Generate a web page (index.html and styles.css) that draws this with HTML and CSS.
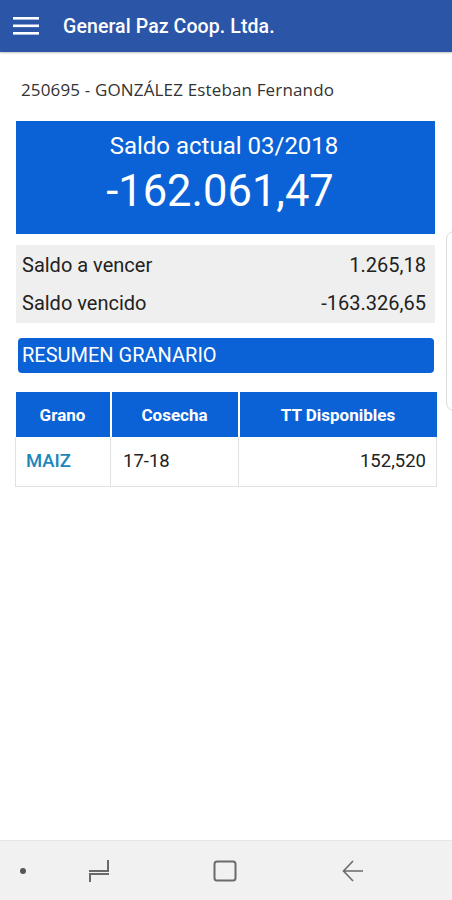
FILE: index.html
```html
<!DOCTYPE html>
<html lang="es">
<head>
<meta charset="utf-8">
<title>General Paz Coop. Ltda.</title>
<link rel="stylesheet" href="styles.css">
</head>
<body>
<div class="screen">
  <header class="appbar">
    <svg class="menu-icon" width="26" height="20" viewBox="0 0 26 20">
      <rect x="0" y="1" width="26" height="2.6" fill="#fff"/>
      <rect x="0" y="8.5" width="26" height="2.6" fill="#fff"/>
      <rect x="0" y="16" width="26" height="2.6" fill="#fff"/>
    </svg>
    <span class="appbar-title">General Paz Coop. Ltda.</span>
  </header>

  <main class="content">
    <div class="client">250695 - GONZÁLEZ Esteban Fernando</div>

    <section class="balance">
      <div class="balance-label">Saldo actual 03/2018</div>
      <div class="balance-amount">-162.061,47</div>
    </section>

    <section class="details">
      <div class="detail-row"><span>Saldo a vencer</span><span>1.265,18</span></div>
      <div class="detail-row"><span>Saldo vencido</span><span>-163.326,65</span></div>
    </section>

    <div class="section-bar">RESUMEN GRANARIO</div>

    <table class="grain">
      <thead>
        <tr><th class="c1">Grano</th><th class="c2">Cosecha</th><th class="c3">TT Disponibles</th></tr>
      </thead>
      <tbody>
        <tr><td class="grain-name">MAIZ</td><td>17-18</td><td class="num">152,520</td></tr>
      </tbody>
    </table>
  </main>

  <nav class="navbar">
    <span class="nav-dot"></span>
    <svg class="nav-icon recent" width="22" height="24" viewBox="0 0 22 24">
      <path d="M20 1 V12 H1" fill="none" stroke="#6a6a6a" stroke-width="2"/>
      <path d="M2 23 V15 H21" fill="none" stroke="#6a6a6a" stroke-width="2"/>
    </svg>
    <svg class="nav-icon home" width="24" height="22" viewBox="0 0 24 22">
      <rect x="1.5" y="1.5" width="21" height="19" rx="2.5" fill="none" stroke="#6a6a6a" stroke-width="2"/>
    </svg>
    <svg class="nav-icon back" width="22" height="22" viewBox="0 0 22 22">
      <path d="M11 1 L1.5 11 L11 21 M1.5 11 H21" fill="none" stroke="#6a6a6a" stroke-width="1.6" stroke-linejoin="miter"/>
    </svg>
  </nav>

  <div class="edge-handle"></div>
</div>
</body>
</html>
```

FILE: styles.css
```css
* { box-sizing: border-box; }

html, body {
  margin: 0;
  padding: 0;
  background: #ffffff;
}

body {
  font-family: Roboto, "Liberation Sans", Arial, sans-serif;
  color: #222;
}

.screen {
  position: relative;
  width: 452px;
  height: 900px;
  display: flex;
  flex-direction: column;
  overflow: hidden;
}

.appbar {
  height: 52px;
  flex: 0 0 52px;
  background: #2b56a8;
  display: flex;
  align-items: center;
  padding-left: 13px;
  box-shadow: 0 1px 2px rgba(0,0,0,0.25);
}

.menu-icon { display: block; }

.appbar-title {
  margin-left: 24px;
  color: #fff;
  font-size: 19.5px;
  font-weight: 500;
  letter-spacing: 0.1px;
  margin-top: 1px;
}

.content {
  flex: 1;
  display: flex;
  flex-direction: column;
}

.client {
  font-family: "Open Sans", "DejaVu Sans", sans-serif;
  font-size: 17px;
  letter-spacing: 0.15px;
  color: #333;
  padding: 27px 0 0 21px;
  height: 69px;
  line-height: 22px;
}

.balance {
  margin: 0 17px 0 16px;
  height: 113px;
  background: #0b62d6;
  color: #fff;
  display: flex;
  flex-direction: column;
  align-items: center;
  padding-top: 10px;
}

.balance-label {
  font-size: 24px;
  line-height: 30px;
  padding-right: 3px;
}

.balance-amount {
  font-size: 43.5px;
  line-height: 50px;
  margin-top: 6px;
  padding-right: 11px;
}

.details {
  margin: 11px 17px 0 16px;
  height: 78px;
  background: #efefef;
  display: flex;
  flex-direction: column;
  justify-content: center;
  padding: 0 9px 0 6px;
  gap: 8px;
}

.detail-row {
  display: flex;
  justify-content: space-between;
  font-size: 20px;
  line-height: 30px;
  color: #222;
}

.section-bar {
  margin: 15px 18px 0 18px;
  height: 35px;
  background: #0b62d6;
  border-radius: 4px;
  color: #fff;
  font-size: 20px;
  line-height: 35px;
  padding-left: 4px;
}

.grain {
  margin: 19px 16px 0 15px;
  width: 421px;
  border-collapse: collapse;
  table-layout: fixed;
}

.grain th {
  background: #0b62d6;
  color: #fff;
  font-size: 17px;
  font-weight: 700;
  height: 45px;
  padding: 0;
  text-align: center;
  border-left: 2px solid #fff;
}

.grain th:first-child { border-left: none; }

.grain .c1 { width: 95px; }
.grain .c2 { width: 128px; }
.grain .c3 { width: 198px; }

.grain td {
  height: 49px;
  font-size: 18.5px;
  color: #222;
  padding: 0 10px 0 12px;
  border: 1px solid #e2e2e2;
  border-top: none;
}

.grain td.grain-name {
  color: #1d86bb;
  font-weight: 500;
  padding-left: 10px;
}

.grain td.num {
  text-align: right;
}

.navbar {
  flex: 0 0 60px;
  height: 60px;
  background: #f1f1f1;
  border-top: 1px solid #e6e6e6;
  display: flex;
  align-items: center;
  padding-left: 20px;
}

.nav-dot {
  width: 6px;
  height: 6px;
  border-radius: 50%;
  background: #555;
  margin-right: 62px;
}

.nav-icon { display: block; }
.recent { margin-right: 103px; }
.home { margin-right: 105px; }

.edge-handle {
  position: absolute;
  left: 446px;
  top: 231px;
  width: 12px;
  height: 180px;
  border: 1px solid #dcdcdc;
  border-radius: 8px 0 0 8px;
  background: #fff;
}
```
